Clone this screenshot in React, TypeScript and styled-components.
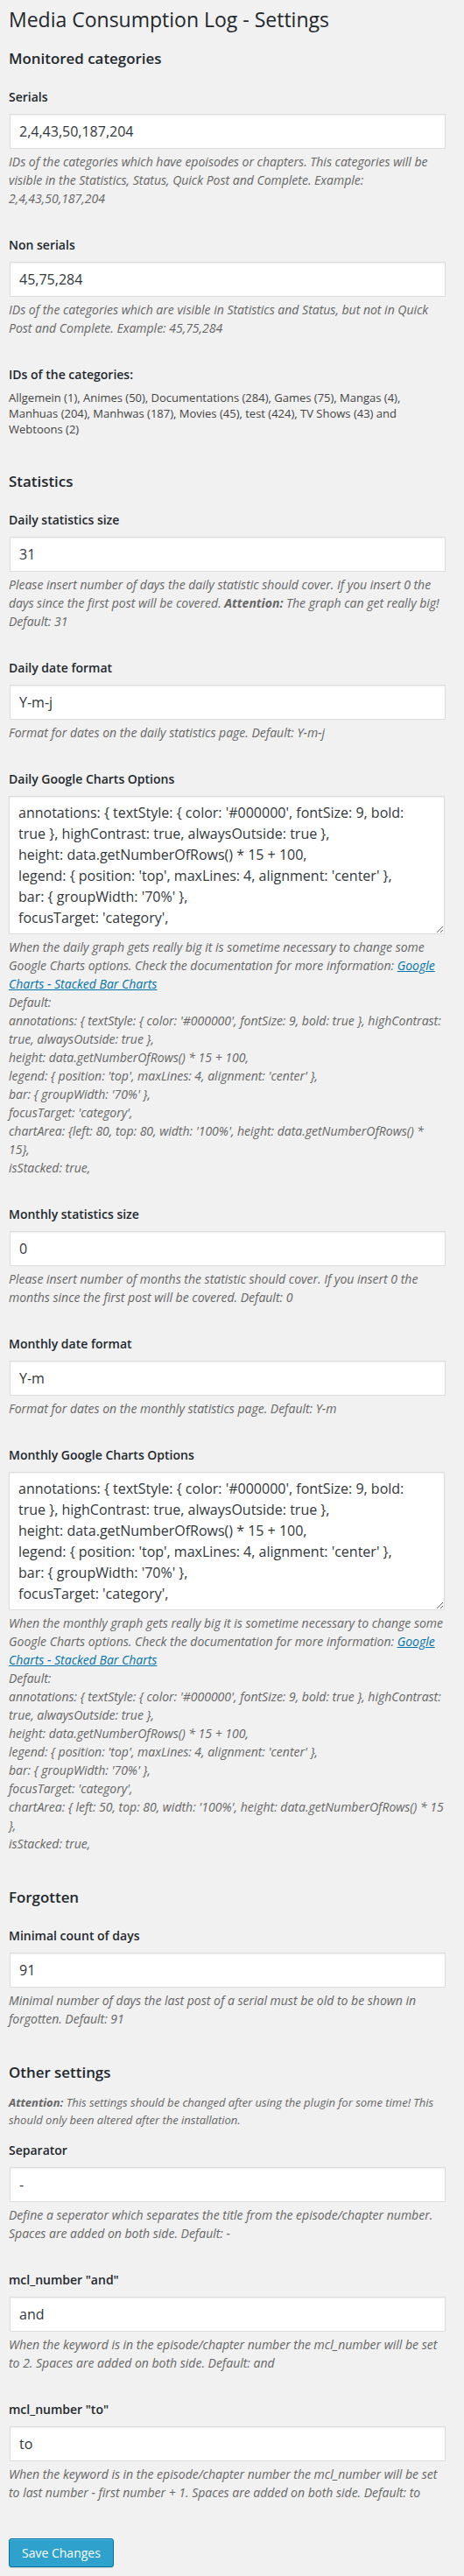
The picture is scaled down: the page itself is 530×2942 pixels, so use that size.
import styled, { createGlobalStyle } from "styled-components";
import type { ReactNode } from "react";

const GlobalStyle = createGlobalStyle`
  html, body {
    margin: 0;
    padding: 0;
    background: #f1f1f1;
  }
  body {
    font-family: "Open Sans", "Liberation Sans", sans-serif;
    font-size: 13px;
    line-height: 1.4;
    color: #444;
  }
`;

const Wrap = styled.div`
  box-sizing: border-box;
  min-height: 2942px;
  padding: 8px 20px 10px 10px;
`;

const Title = styled.h1`
  margin: 0;
  font-size: 23px;
  font-weight: 400;
  line-height: 29px;
  color: #23282d;
`;

const Section = styled.section`
  margin-top: 39px;

  &:first-of-type {
    margin-top: 18px;
  }
`;

const SectionTitle = styled.h2`
  margin: 0 0 12px;
  font-size: 16.9px;
  font-weight: 600;
  line-height: 24px;
  color: #23282d;
`;

const Intro = styled.p`
  margin: 0 0 5px;
  font-size: 13px;
  line-height: 20px;
  font-style: italic;
  color: #666;
`;

const FieldList = styled.div`
  padding-top: 10px;
`;

const Field = styled.div`
  & + & {
    margin-top: 33px;
  }
`;

const Label = styled.label`
  display: block;
  margin-bottom: 9px;
  font-size: 14px;
  font-weight: 600;
  line-height: 20px;
  color: #23282d;
`;

const TextInput = styled.input`
  display: block;
  box-sizing: border-box;
  width: calc(100% - 2px);
  height: 40px;
  margin: 0 1px;
  padding: 0 10px;
  border: 1px solid #ddd;
  border-radius: 0;
  background: #fff;
  box-shadow: inset 0 1px 2px rgba(0, 0, 0, 0.07);
  font-family: "Open Sans", "Liberation Sans", sans-serif;
  font-size: 16px;
  color: #32373c;
  outline: none;
`;

const OptionsArea = styled.textarea`
  display: block;
  box-sizing: border-box;
  width: calc(100% - 2px);
  height: 158px;
  margin: 0;
  padding: 6px 25px 6px 10px;
  border: 1px solid #ddd;
  border-radius: 0;
  background: #fff;
  box-shadow: inset 0 1px 2px rgba(0, 0, 0, 0.07);
  font-family: "Open Sans", "Liberation Sans", sans-serif;
  font-size: 16px;
  line-height: 24px;
  color: #32373c;
  outline: none;
  overflow-y: scroll;
  resize: vertical;

  &::-webkit-scrollbar {
    width: 9px;
  }
  &::-webkit-scrollbar-track {
    background: transparent;
  }
  &::-webkit-scrollbar-thumb {
    background: #e6e6e6;
    background-clip: padding-box;
    border-style: solid;
    border-color: transparent;
    border-width: 1px 1px 1px 2px;
    border-radius: 4px;
  }
`;

const Description = styled.p`
  margin: 4px 0 0;
  font-size: 14px;
  line-height: 21px;
  font-style: italic;
  color: #666;
`;

const CategoryList = styled.p`
  margin: -2px 0 0;
  font-size: 13px;
  line-height: 18px;
  color: #444;
`;

const DocLink = styled.a`
  color: #0073aa;
  text-decoration: underline;
`;

const Submit = styled.p`
  margin: 42px 0 0;
`;

const SaveButton = styled.button`
  display: inline-block;
  margin: 0;
  padding: 6px 14px;
  border: 1px solid #0074a2;
  border-radius: 3px;
  background: #2ea2cc;
  box-shadow: inset 0 1px 0 rgba(120, 200, 230, 0.5),
    0 1px 0 rgba(0, 0, 0, 0.15);
  font-family: "Open Sans", "Liberation Sans", sans-serif;
  font-size: 14px;
  line-height: normal;
  color: #fff;
  cursor: pointer;
`;

type TextFieldProps = {
  label: string;
  value: string;
  children: ReactNode;
};

const TextField = ({ label, value, children }: TextFieldProps) => (
  <Field>
    <Label>{label}</Label>
    <TextInput type="text" defaultValue={value} />
    <Description>{children}</Description>
  </Field>
);

const chartLines = (chartArea: string) => [
  "annotations: { textStyle: { color: '#000000', fontSize: 9, bold: true }, highContrast: true, alwaysOutside: true },",
  "height: data.getNumberOfRows() * 15 + 100,",
  "legend: { position: 'top', maxLines: 4, alignment: 'center' },",
  "bar: { groupWidth: '70%' },",
  "focusTarget: 'category',",
  chartArea,
  "isStacked: true,",
];

type ChartFieldProps = {
  label: string;
  period: string;
  chartArea: string;
};

const ChartField = ({ label, period, chartArea }: ChartFieldProps) => {
  const lines = chartLines(chartArea);
  return (
    <Field>
      <Label>{label}</Label>
      <OptionsArea defaultValue={lines.join("\n")} />
      <Description>
        When the {period} graph gets really big it is sometime necessary to
        change some Google Charts options. Check the documentation for more
        information:{" "}
        <DocLink href="#">Google Charts - Stacked Bar Charts</DocLink>
        <br />
        Default:
        {lines.map((line, i) => (
          <span key={i}>
            <br />
            {line}
          </span>
        ))}
      </Description>
    </Field>
  );
};

export default function App() {
  return (
    <>
      <GlobalStyle />
      <Wrap>
        <Title>Media Consumption Log - Settings</Title>

        <Section>
          <SectionTitle>Monitored categories</SectionTitle>
          <FieldList>
            <TextField label="Serials" value="2,4,43,50,187,204">
              IDs of the categories which have epoisodes or chapters. This
              categories will be visible in the Statistics, Status, Quick Post
              and Complete. Example: 2,4,43,50,187,204
            </TextField>
            <TextField label="Non serials" value="45,75,284">
              IDs of the categories which are visible in Statistics and Status,
              but not in Quick Post and Complete. Example: 45,75,284
            </TextField>
            <Field>
              <Label>IDs of the categories:</Label>
              <CategoryList>
                Allgemein (1), Animes (50), Documentations (284), Games (75),
                Mangas (4), Manhuas (204), Manhwas (187), Movies (45), test
                (424), TV Shows (43) and Webtoons (2)
              </CategoryList>
            </Field>
          </FieldList>
        </Section>

        <Section>
          <SectionTitle>Statistics</SectionTitle>
          <FieldList>
            <TextField label="Daily statistics size" value="31">
              Please insert number of days the daily statistic should cover. If
              you insert 0 the days since the first post will be covered.{" "}
              <strong>Attention:</strong> The graph can get really big!
              Default: 31
            </TextField>
            <TextField label="Daily date format" value="Y-m-j">
              Format for dates on the daily statistics page. Default: Y-m-j
            </TextField>
            <ChartField
              label="Daily Google Charts Options"
              period="daily"
              chartArea="chartArea: {left: 80, top: 80, width: '100%', height: data.getNumberOfRows() * 15},"
            />
            <TextField label="Monthly statistics size" value="0">
              Please insert number of months the statistic should cover. If you
              insert 0 the months since the first post will be covered.
              Default: 0
            </TextField>
            <TextField label="Monthly date format" value="Y-m">
              Format for dates on the monthly statistics page. Default: Y-m
            </TextField>
            <ChartField
              label="Monthly Google Charts Options"
              period="monthly"
              chartArea="chartArea: { left: 50, top: 80, width: '100%', height: data.getNumberOfRows() * 15 },"
            />
          </FieldList>
        </Section>

        <Section>
          <SectionTitle>Forgotten</SectionTitle>
          <FieldList>
            <TextField label="Minimal count of days" value="91">
              Minimal number of days the last post of a serial must be old to be
              shown in forgotten. Default: 91
            </TextField>
          </FieldList>
        </Section>

        <Section>
          <SectionTitle>Other settings</SectionTitle>
          <Intro>
            <strong>Attention:</strong> This settings should be changed after
            using the plugin for some time! This should only been altered after
            the installation.
          </Intro>
          <FieldList>
            <TextField label="Separator" value="-">
              Define a seperator which separates the title from the
              episode/chapter number. Spaces are added on both side. Default: -
            </TextField>
            <TextField label='mcl_number "and"' value="and">
              When the keyword is in the episode/chapter number the mcl_number
              will be set to 2. Spaces are added on both side. Default: and
            </TextField>
            <TextField label='mcl_number "to"' value="to">
              When the keyword is in the episode/chapter number the mcl_number
              will be set to last number - first number + 1. Spaces are added on
              both side. Default: to
            </TextField>
          </FieldList>
        </Section>

        <Submit>
          <SaveButton type="button">Save Changes</SaveButton>
        </Submit>
      </Wrap>
    </>
  );
}
